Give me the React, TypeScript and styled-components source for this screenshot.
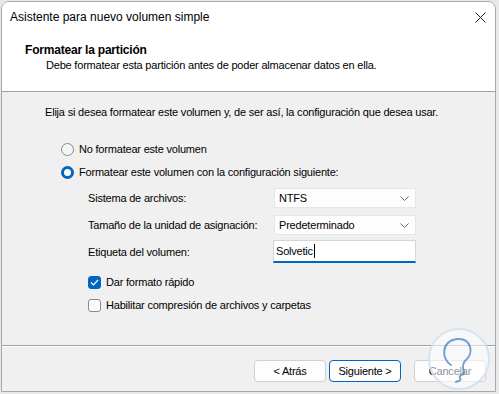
import React from 'react'
import styled, { createGlobalStyle } from 'styled-components'

const Global = createGlobalStyle`
  body {
    margin: 0;
    background: #e8e8e8;
    font-family: "Liberation Sans", Arial, sans-serif;
    font-size: 11px;
    letter-spacing: -0.2px;
    color: #000;
  }
`

const Window = styled.div`
  position: relative;
  margin: 1px 0 0 1px;
  width: 495px;
  height: 391px;
  border: 1px solid #a8a8a8;
  border-radius: 8px 8px 0 0;
  background: #f0f0f0;
  display: flex;
  flex-direction: column;
  overflow: hidden;
  box-sizing: border-box;
`

const TitleBar = styled.div`
  height: 30px;
  flex: none;
  background: #fff;
  display: flex;
  align-items: center;
  justify-content: space-between;
  padding: 0 9px 0 8px;
  font-size: 12px;
  letter-spacing: 0;
`

const Header = styled.div`
  height: 60px;
  flex: none;
  background: #fff;
  padding: 10px 0 0 23px;
  box-sizing: border-box;
  border-bottom: 1px solid #a0a0a0;
`

const HeaderTitle = styled.div`
  font-weight: bold;
  font-size: 12px;
  line-height: 16px;
`

const HeaderSub = styled.div`
  padding-left: 21px;
  line-height: 16px;
  margin-top: -1px;
`

const Body = styled.div`
  flex: 1;
  padding: 12px 0 0 43px;
`

const Line = styled.div<{ $top?: number; $indent?: number }>`
  display: flex;
  align-items: center;
  height: 16px;
  margin-top: ${p => p.$top ?? 0}px;
  padding-left: ${p => p.$indent ?? 0}px;
  gap: 5px;
`

const FieldRow = styled.div<{ $top: number; $h?: number }>`
  display: grid;
  grid-template-columns: 186px 142px;
  align-items: center;
  height: ${p => p.$h ?? 20}px;
  margin-top: ${p => p.$top}px;
  padding-left: 43px;
`

const Radio = styled.span<{ $on?: boolean }>`
  width: 13px;
  height: 13px;
  flex: none;
  border-radius: 50%;
  box-sizing: border-box;
  border: ${p => (p.$on ? '3.5px solid #0067c0' : '1px solid #8a8a8a')};
  background: ${p => (p.$on ? '#fff' : '#f5f5f5')};
`

const Check = styled.span<{ $on?: boolean }>`
  width: 13px;
  height: 13px;
  flex: none;
  border-radius: 3px;
  box-sizing: border-box;
  border: 1px solid ${p => (p.$on ? '#0067c0' : '#8a8a8a')};
  background: ${p => (p.$on ? '#0067c0' : '#fbfbfb')};
  display: flex;
  align-items: center;
  justify-content: center;
`

const Select = styled.div`
  height: 20px;
  background: #fdfdfd;
  border: 1px solid #e6e6e6;
  box-sizing: border-box;
  display: flex;
  align-items: center;
  justify-content: space-between;
  padding: 0 6px 0 4px;
`

const Input = styled.div`
  height: 23px;
  background: #fff;
  border: 1px solid #d6d6d6;
  border-bottom: 2px solid #0067c0;
  box-sizing: border-box;
  display: flex;
  align-items: center;
  padding-left: 2px;
  margin-left: -1px;
`

const Caret = styled.span`
  width: 1px;
  height: 14px;
  background: #000;
  margin-left: 1px;
`

const Footer = styled.div`
  height: 31px;
  flex: none;
  border-top: 1px solid #a0a0a0;
  box-shadow: inset 0 1px 0 #fff;
  display: flex;
  justify-content: flex-end;
  padding: 14px 9px 0 0;
`

const Button = styled.button<{ $primary?: boolean; $gap?: number }>`
  width: 72px;
  height: 22px;
  margin-left: ${p => p.$gap ?? 0}px;
  border: 1px solid ${p => (p.$primary ? '#0067c0' : '#d0d0d0')};
  border-radius: 4px;
  background: #fdfdfd;
  font-family: inherit;
  font-size: 11px;
  letter-spacing: -0.2px;
  color: #000;
  padding: 0;
`

const Watermark = styled.svg`
  position: absolute;
  right: 4px;
  bottom: 0px;
`

const Chevron = () => (
  <svg width="9" height="5" viewBox="0 0 9 5">
    <path d="M0.5 0.5 L4.5 4.5 L8.5 0.5" fill="none" stroke="#666" strokeWidth="1" />
  </svg>
)

export default function App() {
  return (
    <>
      <Global />
      <Window>
        <TitleBar>
          <span>Asistente para nuevo volumen simple</span>
          <svg width="11" height="11" viewBox="0 0 11 11">
            <path d="M0.5 0.5 L10.5 10.5 M10.5 0.5 L0.5 10.5" stroke="#222" strokeWidth="1" />
          </svg>
        </TitleBar>
        <Header>
          <HeaderTitle>Formatear la partición</HeaderTitle>
          <HeaderSub>Debe formatear esta partición antes de poder almacenar datos en ella.</HeaderSub>
        </Header>
        <Body>
          <Line>Elija si desea formatear este volumen y, de ser así, la configuración que desea usar.</Line>
          <Line $top={21} $indent={16}>
            <Radio />
            No formatear este volumen
          </Line>
          <Line $top={7} $indent={16}>
            <Radio $on />
            Formatear este volumen con la configuración siguiente:
          </Line>
          <FieldRow $top={8}>
            <span>Sistema de archivos:</span>
            <Select>
              <span>NTFS</span>
              <Chevron />
            </Select>
          </FieldRow>
          <FieldRow $top={7}>
            <span>Tamaño de la unidad de asignación:</span>
            <Select>
              <span>Predeterminado</span>
              <Chevron />
            </Select>
          </FieldRow>
          <FieldRow $top={5} $h={23}>
            <span>Etiqueta del volumen:</span>
            <Input>
              <span>Solvetic</span>
              <Caret />
            </Input>
          </FieldRow>
          <Line $top={11} $indent={43}>
            <Check $on>
              <svg width="9" height="7" viewBox="0 0 9 7">
                <path d="M1 3.5 L3.5 6 L8 1" fill="none" stroke="#fff" strokeWidth="1.2" />
              </svg>
            </Check>
            Dar formato rápido
          </Line>
          <Line $top={7} $indent={43}>
            <Check />
            Habilitar compresión de archivos y carpetas
          </Line>
        </Body>
        <Footer>
          <Button>&lt; Atrás</Button>
          <Button $primary $gap={3}>Siguiente &gt;</Button>
          <Button $gap={13}>Cancelar</Button>
        </Footer>
        <Watermark width="64" height="64" viewBox="0 0 64 64">
          <circle cx="32" cy="32" r="30" fill="rgba(255,255,255,0.55)" stroke="rgba(210,225,240,0.9)" strokeWidth="2" />
          <path
            d="M24 38 C14 32 14 14 30 12 C44 11 48 26 38 34 C35 37 36 42 37 45 C38 48 31 48 33 51 C35 54 30 54 29 55"
            fill="none"
            stroke="rgba(70,130,200,0.75)"
            strokeWidth="2"
            strokeLinecap="round"
          />
        </Watermark>
      </Window>
    </>
  )
}
